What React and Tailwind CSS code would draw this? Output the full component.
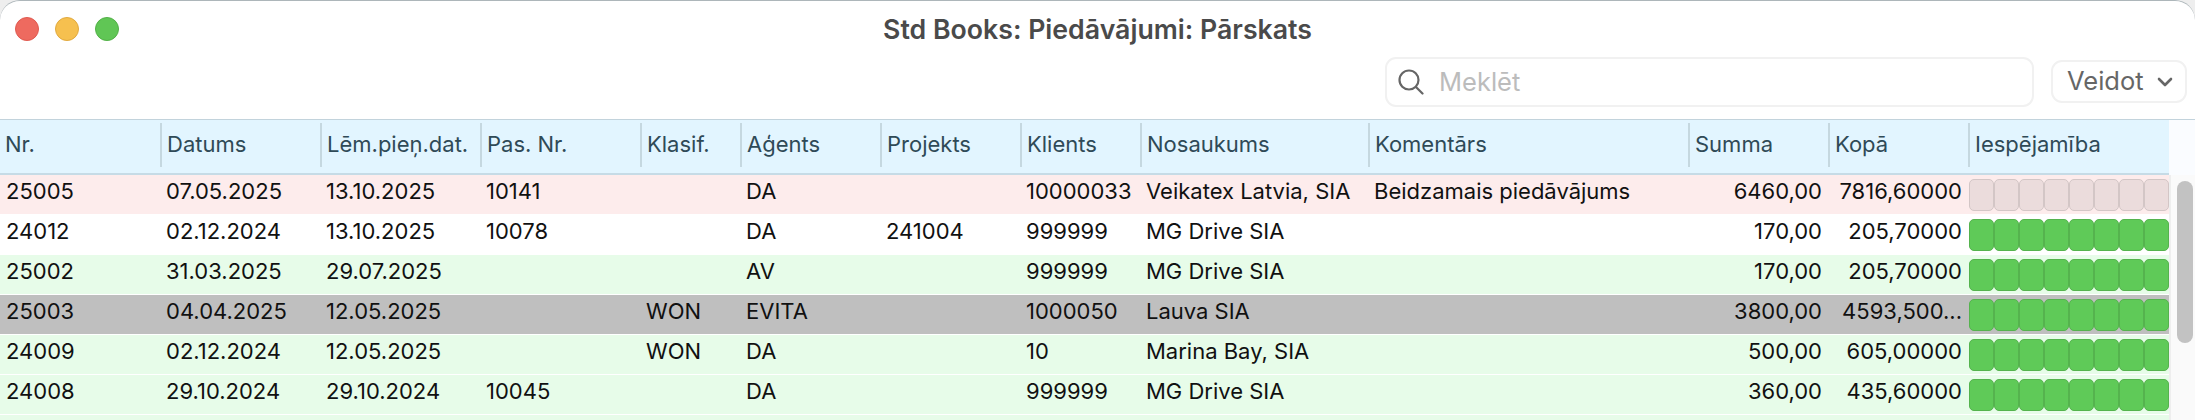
import React from 'react'

const GRID = 'grid grid-cols-[160px_160px_160px_160px_100px_140px_140px_120px_228px_320px_140px_140px_201px]'

const headers = ['Nr.', 'Datums', 'Lēm.pieņ.dat.', 'Pas. Nr.', 'Klasif.', 'Aģents', 'Projekts', 'Klients', 'Nosaukums', 'Komentārs', 'Summa', 'Kopā', 'Iespējamība']

const rows = [
  { bg: 'bg-[#fdecec]', pale: true, cells: ['25005', '07.05.2025', '13.10.2025', '10141', '', 'DA', '', '10000033', 'Veikatex Latvia, SIA', 'Beidzamais piedāvājums', '6460,00', '7816,60000'] },
  { bg: 'bg-white', cells: ['24012', '02.12.2024', '13.10.2025', '10078', '', 'DA', '241004', '999999', 'MG Drive SIA', '', '170,00', '205,70000'] },
  { bg: 'bg-[#e7fce9]', cells: ['25002', '31.03.2025', '29.07.2025', '', '', 'AV', '', '999999', 'MG Drive SIA', '', '170,00', '205,70000'] },
  { bg: 'bg-[#bfbfbf]', cells: ['25003', '04.04.2025', '12.05.2025', '', 'WON', 'EVITA', '', '1000050', 'Lauva SIA', '', '3800,00', '4593,500...'] },
  { bg: 'bg-[#e7fce9]', cells: ['24009', '02.12.2024', '12.05.2025', '', 'WON', 'DA', '', '10', 'Marina Bay, SIA', '', '500,00', '605,00000'] },
  { bg: 'bg-[#e7fce9]', cells: ['24008', '29.10.2024', '29.10.2024', '10045', '', 'DA', '', '999999', 'MG Drive SIA', '', '360,00', '435,60000'] },
]

function Probability({ pale }) {
  return (
    <div className="flex h-[32px] w-full">
      {[0, 1, 2, 3, 4, 5, 6, 7].map((i) => (
        <div
          key={i}
          className={pale
            ? 'flex-1 rounded-[5px] border border-[#d3c6c6] bg-[#ebdcdc]'
            : 'flex-1 rounded-[5px] border border-[#55b34e] bg-[#5fca58]'}
        />
      ))}
    </div>
  )
}

function Row({ row }) {
  return (
    <div className={`${GRID} mb-[1.5px] h-[38.5px] items-center text-[22px] text-[#111] ${row.bg}`}>
      {row.cells.map((cell, i) => {
        const right = i === 10 || i === 11
        return (
          <div key={i} className={right ? 'truncate pr-[6px] pb-[5px] text-right' : 'truncate pl-[6px] pb-[5px]'}>
            {cell}
          </div>
        )
      })}
      <div className="mt-px pl-px">
        <Probability pale={row.pale} />
      </div>
    </div>
  )
}

export default function App() {
  return (
    <div className="h-[420px] w-[2195px] overflow-hidden bg-[#eeeeee] font-['Inter',sans-serif]">
      <div className="h-[420px] overflow-hidden rounded-t-[20px] border-t border-t-[#adb6ba] bg-white">
        <div className="grid h-[56px] grid-cols-[1fr_auto_1fr] items-center">
          <div className="flex gap-[16px] pl-[15px]">
            <span className="h-[24px] w-[24px] rounded-full border border-[#df5a50] bg-[#ee6a5f]" />
            <span className="h-[24px] w-[24px] rounded-full border border-[#e0a93f] bg-[#f6c04f]" />
            <span className="h-[24px] w-[24px] rounded-full border border-[#52b047] bg-[#60c655]" />
          </div>
          <div className="text-[26.7px] font-semibold text-[#4a4a4a]">Std Books: Piedāvājumi: Pārskats</div>
          <div />
        </div>

        <div className="flex h-[62px] items-start justify-end gap-[17px] pr-[8px]">
          <div className="flex h-[50px] w-[649px] items-center gap-[15px] rounded-[11px] border-2 border-[#f1f1f1] pl-[11px]">
            <svg width="26" height="26" viewBox="0 0 26 26" fill="none" stroke="#666" strokeWidth="2.2" strokeLinecap="round">
              <circle cx="11" cy="11" r="9.5" />
              <line x1="18" y1="18" x2="24.5" y2="24.5" />
            </svg>
            <span className="text-[25.5px] text-[#bcbcbc]">Meklēt</span>
          </div>
          <div className="mt-[3px] flex h-[43px] w-[136px] items-center gap-[13px] rounded-[11px] border-2 border-[#f1f1f1] pl-[14px]">
            <span className="text-[25.5px] text-[#666]">Veidot</span>
            <svg width="16" height="10" viewBox="0 0 16 10" fill="none" stroke="#666" strokeWidth="2.6" strokeLinecap="round" strokeLinejoin="round">
              <polyline points="2,2 8,8 14,2" />
            </svg>
          </div>
        </div>

        <div className="flex h-[56px] border-t border-t-[#c2d3dc] bg-[#fafcff]">
          <div className={`${GRID} h-[55px] w-[2169px] border-b-2 border-b-[#c6dbe6] bg-[#e2f5ff] text-[22px] text-[#2f4a57]`}>
            {headers.map((label, i) => (
              <div key={label} className="flex h-full items-center pb-[3px]">
                <div className={i === 0 ? 'pb-[2px] pl-[5px]' : 'flex h-[44px] items-center border-l-2 border-l-[#c5d8e0] pb-[2px] pl-[5px]'}>
                  {label}
                </div>
              </div>
            ))}
          </div>
        </div>

        <div className="flex">
          <div className="w-[2169px] shrink-0">
            {rows.map((row) => (
              <Row key={row.cells[0]} row={row} />
            ))}
            <div className="h-[38.5px] bg-[#e7fce9]" />
          </div>
          <div className="h-[260px] flex-1 border-l-2 border-l-[#eeeeee] bg-[#fafafa] pl-[6px] pt-[6px]">
            <div className="h-[162px] w-[16px] rounded-full bg-[#c2c2c2]" />
          </div>
        </div>
      </div>
    </div>
  )
}
